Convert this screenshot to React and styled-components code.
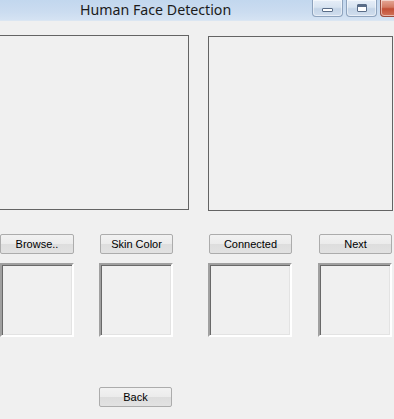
import React from 'react';
import styled, { createGlobalStyle } from 'styled-components';

const GlobalStyle = createGlobalStyle`
  html, body {
    margin: 0;
    padding: 0;
    background: #f0f0f0;
  }
  body {
    width: 394px;
    height: 419px;
    overflow: hidden;
    font-family: "Liberation Sans", Arial, sans-serif;
  }
`;

const Window = styled.div`
  width: 394px;
  height: 419px;
  overflow: hidden;
  background: #f0f0f0;
`;

const TitleBar = styled.div`
  height: 21px;
  display: flex;
  align-items: flex-start;
  background: linear-gradient(to bottom, #c2d7ee 0%, #cbdcf0 60%, #d5e3f3 100%);
  border-bottom: 1px solid #dbe6f2;
  overflow: hidden;
  box-sizing: border-box;
`;

const Title = styled.div`
  padding-left: 80px;
  font-family: "Noto Sans", "Open Sans", sans-serif;
  font-size: 14.2px;
  line-height: 20px;
  color: #1b1b1b;
  white-space: nowrap;
`;

const Controls = styled.div`
  margin-left: auto;
  display: flex;
  gap: 3px;
  margin-right: -28px;
`;

const CtrlButton = styled.div`
  width: ${p => p.$w}px;
  height: 17px;
  box-sizing: border-box;
  border: 1px solid ${p => (p.$close ? '#9a4a3c' : '#8ea3bd')};
  border-top: none;
  border-radius: 0 0 4px 4px;
  background: ${p =>
    p.$close
      ? 'linear-gradient(to bottom, #e6a898 0%, #d37a63 45%, #c24e35 55%, #d2735a 100%)'
      : 'linear-gradient(to bottom, #e6eef8 0%, #d8e4f1 45%, #c4d4e7 55%, #d1deee 100%)'};
  box-shadow: inset 0 0 0 1px rgba(255, 255, 255, 0.5);
  display: flex;
  align-items: center;
  justify-content: center;
`;

const MinGlyph = styled.div`
  width: 9px;
  height: 2px;
  margin-top: 4px;
  background: #fff;
  border: 1px solid #5a6d88;
  border-radius: 1px;
`;

const MaxGlyph = styled.div`
  width: 8px;
  height: 6px;
  border: 1px solid #5a6d88;
  background: #fff;
  box-shadow: inset 0 2px 0 #5a6d88;
  border-radius: 1px;
`;

const Client = styled.div`
  display: flex;
  flex-direction: column;
`;

const PanelRow = styled.div`
  display: flex;
  align-items: flex-start;
  gap: 19px;
  margin-top: 14px;
`;

const ImagePanel = styled.div`
  box-sizing: border-box;
  width: ${p => p.$w}px;
  height: 175px;
  margin-left: ${p => p.$ml || 0}px;
  margin-top: ${p => p.$mt || 0}px;
  border: 1px solid #646464;
  background: #f0f0f0;
`;

const ToolRow = styled.div`
  display: flex;
  margin-top: 23px;
`;

const ToolColumn = styled.div`
  display: flex;
  flex-direction: column;
  align-items: flex-end;
  gap: 9px;
  width: ${p => p.$w}px;
  margin-left: ${p => p.$ml}px;
`;

const WinButton = styled.button`
  box-sizing: border-box;
  width: ${p => p.$w}px;
  height: 20px;
  padding: 0;
  border: 1px solid #acacac;
  border-radius: 2px;
  background: linear-gradient(to bottom, #f2f2f2 0%, #ebebeb 50%, #dddddd 51%, #e2e2e2 100%);
  font-family: "Liberation Sans", Arial, sans-serif;
  font-size: 11px;
  color: #000;
  line-height: 18px;
  text-align: center;
`;

const SunkenBox = styled.div`
  box-sizing: border-box;
  width: 100%;
  height: 74px;
  border-style: solid;
  border-width: 2px;
  border-color: #a0a0a0 #ffffff #ffffff #a0a0a0;
  box-shadow: inset 1px 1px 0 #696969, inset -1px -1px 0 #e3e3e3;
  background: #f0f0f0;
`;

const BackRow = styled.div`
  display: flex;
  margin-top: 50px;
  padding-left: 99px;
`;

const tools = [
  { label: 'Browse..', w: 74, ml: 0 },
  { label: 'Skin Color', w: 74, ml: 25 },
  { label: 'Connected', w: 84, ml: 35 },
  { label: 'Next', w: 74, ml: 26 },
];

export default function App() {
  return (
    <Window>
      <GlobalStyle />
      <TitleBar>
        <Title>Human Face Detection</Title>
        <Controls>
          <CtrlButton $w={31}><MinGlyph /></CtrlButton>
          <CtrlButton $w={31}><MaxGlyph /></CtrlButton>
          <CtrlButton $w={42} $close />
        </Controls>
      </TitleBar>
      <Client>
        <PanelRow>
          <ImagePanel $w={201} $ml={-12} />
          <ImagePanel $w={185} $mt={1} />
        </PanelRow>
        <ToolRow>
          {tools.map(t => (
            <ToolColumn key={t.label} $w={t.w} $ml={t.ml}>
              <WinButton $w={t.w - (t.ml ? 1 : 0)}>{t.label}</WinButton>
              <SunkenBox />
            </ToolColumn>
          ))}
        </ToolRow>
        <BackRow>
          <WinButton $w={73}>Back</WinButton>
        </BackRow>
      </Client>
    </Window>
  );
}
